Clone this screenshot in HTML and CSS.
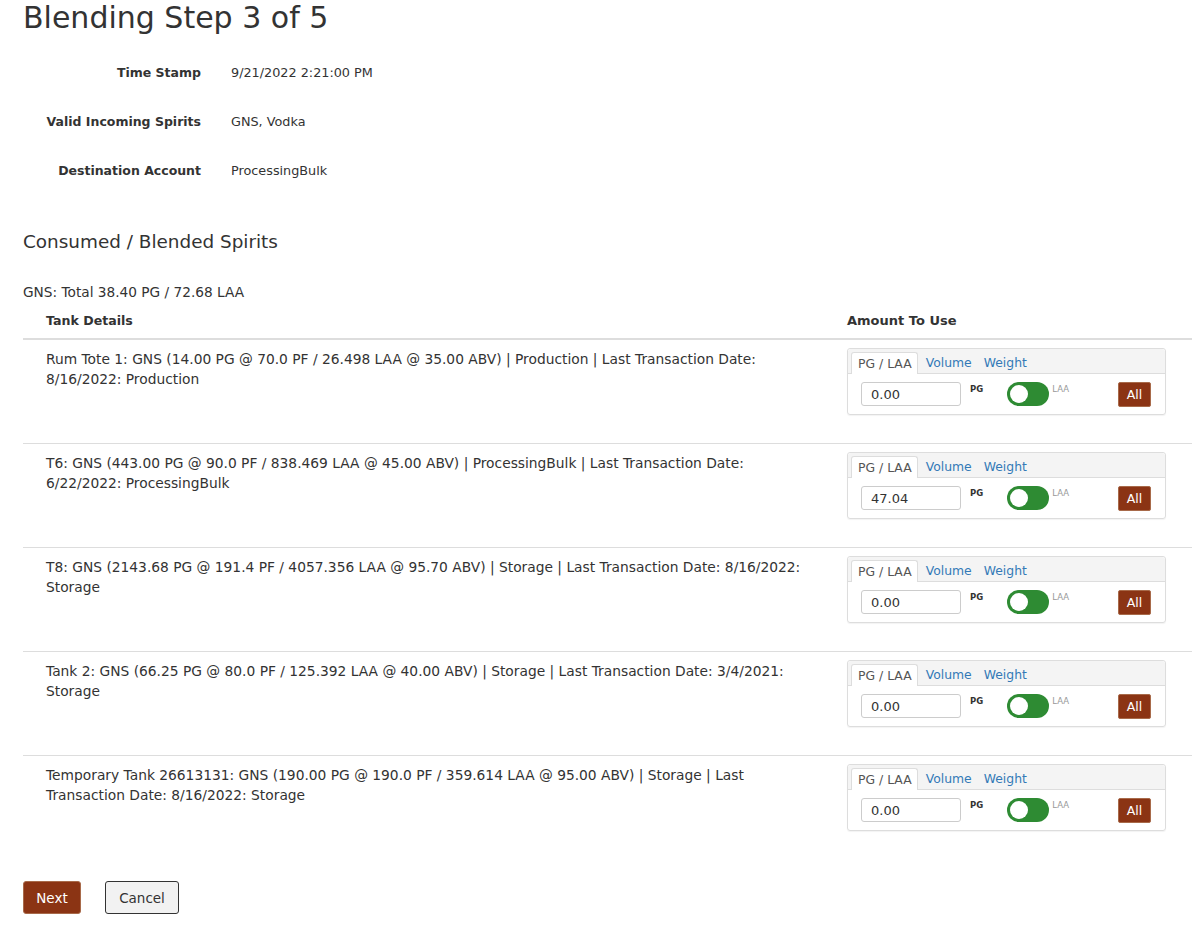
FILE: index.html
```html
<!DOCTYPE html>
<html lang="en">
<head>
	<meta charset="UTF-8">
	<title>Blending Step 3 of 5</title>
	<link rel="stylesheet" href="styles.css">
</head>
<body>
	<div class="page">
		<h1 class="title">Blending Step 3 of 5</h1>

		<div class="info">
			<div class="info-label">Time Stamp</div>
			<div class="info-value">9/21/2022 2:21:00 PM</div>
			<div class="info-label">Valid Incoming Spirits</div>
			<div class="info-value">GNS, Vodka</div>
			<div class="info-label">Destination Account</div>
			<div class="info-value">ProcessingBulk</div>
		</div>

		<h2 class="section">Consumed / Blended Spirits</h2>

		<div class="total">GNS: Total 38.40 PG / 72.68 LAA</div>

		<table class="tanks">
			<thead>
				<tr>
					<th class="col-details">Tank Details</th>
					<th class="col-amount">Amount To Use</th>
				</tr>
			</thead>
			<tbody>
				<tr>
					<td>Rum Tote 1: GNS (14.00 PG @ 70.0 PF / 26.498 LAA @ 35.00 ABV) | Production | Last Transaction Date: 8/16/2022: Production</td>
					<td>
						<div class="amount">
							<div class="tabs">
								<span class="tab active">PG / LAA</span>
								<span class="tab">Volume</span>
								<span class="tab">Weight</span>
							</div>
							<div class="amount-body">
								<input class="amount-input" type="text" value="0.00">
								<span class="unit">PG</span>
								<span class="switch"><span class="knob"></span></span>
								<span class="unit off">LAA</span>
								<button class="btn-all">All</button>
							</div>
						</div>
					</td>
				</tr>
				<tr>
					<td>T6: GNS (443.00 PG @ 90.0 PF / 838.469 LAA @ 45.00 ABV) | ProcessingBulk | Last Transaction Date: 6/22/2022: ProcessingBulk</td>
					<td>
						<div class="amount">
							<div class="tabs">
								<span class="tab active">PG / LAA</span>
								<span class="tab">Volume</span>
								<span class="tab">Weight</span>
							</div>
							<div class="amount-body">
								<input class="amount-input" type="text" value="47.04">
								<span class="unit">PG</span>
								<span class="switch"><span class="knob"></span></span>
								<span class="unit off">LAA</span>
								<button class="btn-all">All</button>
							</div>
						</div>
					</td>
				</tr>
				<tr>
					<td>T8: GNS (2143.68 PG @ 191.4 PF / 4057.356 LAA @ 95.70 ABV) | Storage | Last Transaction Date: 8/16/2022: Storage</td>
					<td>
						<div class="amount">
							<div class="tabs">
								<span class="tab active">PG / LAA</span>
								<span class="tab">Volume</span>
								<span class="tab">Weight</span>
							</div>
							<div class="amount-body">
								<input class="amount-input" type="text" value="0.00">
								<span class="unit">PG</span>
								<span class="switch"><span class="knob"></span></span>
								<span class="unit off">LAA</span>
								<button class="btn-all">All</button>
							</div>
						</div>
					</td>
				</tr>
				<tr>
					<td>Tank 2: GNS (66.25 PG @ 80.0 PF / 125.392 LAA @ 40.00 ABV) | Storage | Last Transaction Date: 3/4/2021: Storage</td>
					<td>
						<div class="amount">
							<div class="tabs">
								<span class="tab active">PG / LAA</span>
								<span class="tab">Volume</span>
								<span class="tab">Weight</span>
							</div>
							<div class="amount-body">
								<input class="amount-input" type="text" value="0.00">
								<span class="unit">PG</span>
								<span class="switch"><span class="knob"></span></span>
								<span class="unit off">LAA</span>
								<button class="btn-all">All</button>
							</div>
						</div>
					</td>
				</tr>
				<tr>
					<td>Temporary Tank 26613131: GNS (190.00 PG @ 190.0 PF / 359.614 LAA @ 95.00 ABV) | Storage | Last Transaction Date: 8/16/2022: Storage</td>
					<td>
						<div class="amount">
							<div class="tabs">
								<span class="tab active">PG / LAA</span>
								<span class="tab">Volume</span>
								<span class="tab">Weight</span>
							</div>
							<div class="amount-body">
								<input class="amount-input" type="text" value="0.00">
								<span class="unit">PG</span>
								<span class="switch"><span class="knob"></span></span>
								<span class="unit off">LAA</span>
								<button class="btn-all">All</button>
							</div>
						</div>
					</td>
				</tr>
			</tbody>
		</table>

		<div class="actions">
			<button class="btn-next">Next</button>
			<button class="btn-cancel">Cancel</button>
		</div>
	</div>
</body>
</html>
```

FILE: styles.css
```css
* { margin: 0; padding: 0; box-sizing: border-box; }
body {
	background-color: #fff;
	color: #333;
	font-family: "DejaVu Sans", "Noto Sans", sans-serif;
	font-size: 13px;
}
.page {
	padding: 0 0 0 23px;
}
.title {
	font-weight: normal;
	font-size: 30px;
	line-height: 36px;
	color: #333;
}

.info {
	display: grid;
	grid-template-columns: 178px auto;
	column-gap: 30px;
	row-gap: 31px;
	margin-top: 28px;
	line-height: 18px;
}
.info-label {
	text-align: right;
	font-weight: bold;
	font-size: 12.5px;
}
.info-value {
	font-size: 12.8px;
}

.section {
	font-weight: normal;
	font-size: 18.4px;
	line-height: 24px;
	margin-top: 50px;
}
.total {
	margin-top: 29px;
	line-height: 18px;
	font-size: 13.7px;
}

.tanks {
	width: 100%;
	border-collapse: collapse;
	margin-top: 2px;
}
.tanks th {
	text-align: left;
	font-weight: bold;
	font-size: 12.6px;
	padding: 8px 0 8px 23px;
	line-height: 19px;
	border-bottom: 2px solid #ddd;
}
.tanks th.col-amount {
	font-size: 13px;
	padding-left: 11px;
}
.tanks td {
	vertical-align: top;
	padding: 9px 15px 27px 23px;
	line-height: 20px;
	border-top: 1px solid #ddd;
	font-size: 13.8px;
}
.tanks td + td {
	padding: 8px 0 28px 11px;
}
.tanks tbody tr:first-child td { border-top: none; }
.col-amount { width: 356px; }

.amount {
	width: 319px;
	border: 1px solid #ddd;
	border-radius: 3px;
	box-shadow: 0 1px 1px rgba(0, 0, 0, 0.05);
}
.tabs {
	display: flex;
	background-color: #f4f4f4;
	border-bottom: 1px solid #ddd;
	padding: 3px 3px 0;
	height: 25px;
	border-radius: 3px 3px 0 0;
}
.tab {
	padding: 0 5px 0 6px;
	line-height: 21px;
	font-size: 12.4px;
	color: #337ab7;
	margin-right: 1px;
}
.tab.active {
	background-color: #fff;
	color: #555;
	border: 1px solid #ddd;
	border-bottom: none;
	border-radius: 3px 3px 0 0;
	margin-bottom: -1px;
	margin-right: 2px;
	line-height: 21px;
	height: 22px;
}
.amount-body {
	display: flex;
	align-items: flex-start;
	padding: 8px 14px 8px 13px;
	height: 40px;
}
.amount-input {
	width: 100px;
	height: 24px;
	border: 1px solid #ccc;
	border-radius: 3px;
	padding: 0 9px;
	font-family: inherit;
	font-size: 13px;
	color: #333;
}
.unit {
	font-size: 8.5px;
	font-weight: bold;
	color: #333;
	margin: 0 0 0 9px;
	line-height: 14px;
}
.unit.off {
	font-weight: normal;
	color: #999;
	margin-left: 3px;
}
.switch {
	position: relative;
	width: 42px;
	height: 24px;
	border-radius: 12px;
	background-color: #2e8b33;
	margin-left: 24px;
}
.knob {
	position: absolute;
	left: 3px;
	top: 3px;
	width: 18px;
	height: 18px;
	border-radius: 50%;
	background-color: #fff;
}
.btn-all {
	margin-left: auto;
	width: 33px;
	height: 25px;
	background-color: #8b3414;
	border: 1px solid #a86a4a;
	border-radius: 2px;
	color: #fff;
	font-family: inherit;
	font-size: 12.5px;
}

.actions {
	display: flex;
	gap: 24px;
	margin-top: 22px;
	padding-bottom: 14px;
}
.btn-next {
	width: 58px;
	height: 33px;
	background-color: #8b3414;
	border: 1px solid #a86a4a;
	border-radius: 3px;
	color: #fff;
	font-family: inherit;
	font-size: 13.5px;
}
.btn-cancel {
	width: 74px;
	height: 33px;
	background-color: #f2f2f2;
	border: 1px solid #333;
	border-radius: 3px;
	color: #333;
	font-family: inherit;
	font-size: 13.5px;
}
```
